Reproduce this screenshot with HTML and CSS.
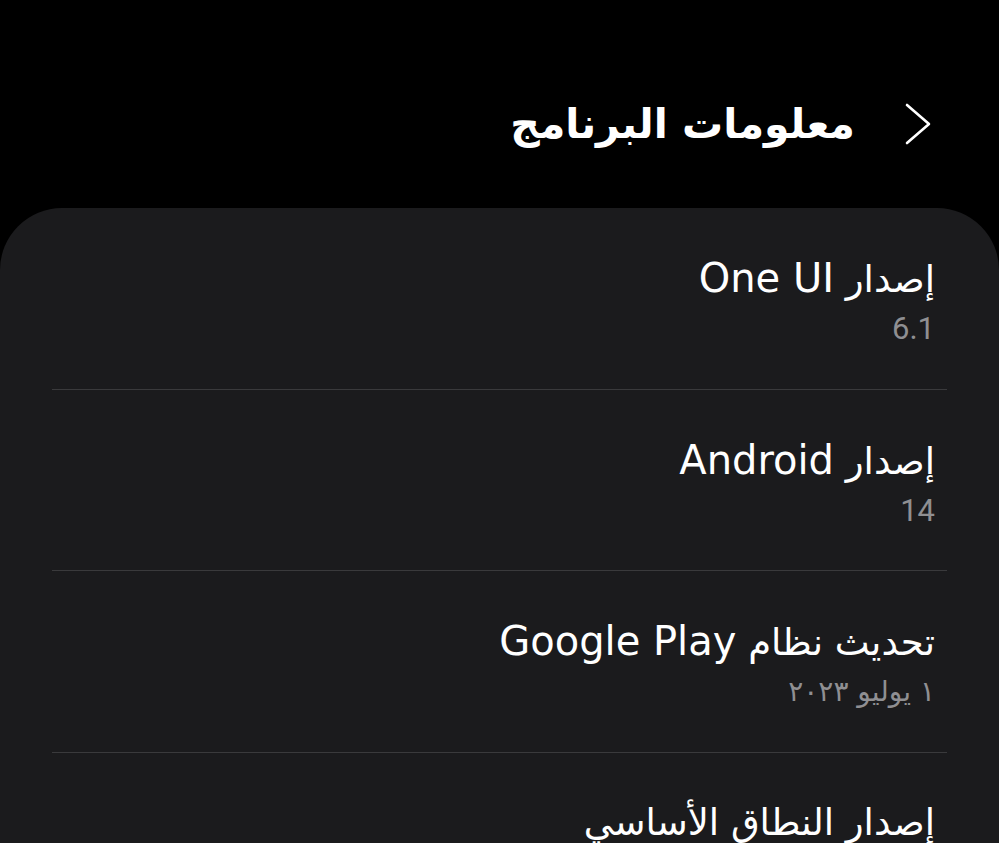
FILE: index.html
```html
<!DOCTYPE html>
<html lang="ar" dir="rtl">
<head>
<meta charset="utf-8">
<link rel="stylesheet" href="styles.css">
</head>
<body>
<header class="header">
  <svg class="back" width="30" height="44" viewBox="0 0 30 44" aria-hidden="true">
    <path d="M4 3 L26 22 L4 41" fill="none" stroke="#ffffff" stroke-width="2.6" stroke-linecap="round" stroke-linejoin="round"/>
  </svg>
  <h1 class="title">معلومات البرنامج</h1>
</header>
<main class="card">
  <div class="row">
    <div class="row-title">إصدار <span class="lat">One UI</span></div>
    <div class="row-sub">6.1</div>
  </div>
  <div class="row">
    <div class="row-title">إصدار <span class="lat">Android</span></div>
    <div class="row-sub">14</div>
  </div>
  <div class="row">
    <div class="row-title">تحديث نظام <span class="lat">Google Play</span></div>
    <div class="row-sub row-sub-ar">١ يوليو ٢٠٢٣</div>
  </div>
  <div class="row">
    <div class="row-title">إصدار النطاق الأساسي</div>
    <div class="row-sub">&nbsp;</div>
  </div>
</main>
</body>
</html>
```

FILE: styles.css
```css
html, body {
  margin: 0;
  padding: 0;
  background: #000000;
  height: 843px;
  overflow: hidden;
}
body {
  font-family: "DejaVu Sans", sans-serif;
  color: #ffffff;
  width: 999px;
}
.header {
  height: 168px;
  padding-top: 40px;
  padding-right: 66px;
  display: flex;
  align-items: center;
  gap: 48px;
  box-sizing: content-box;
}
.back {
  display: block;
  flex: none;
}
.title {
  margin: 0;
  font-family: "DejaVu Sans", sans-serif;
  font-weight: bold;
  font-size: 41px;
  line-height: 60px;
  color: #ffffff;
}
.card {
  background: #1b1b1d;
  border-radius: 62px 62px 0 0;
  min-height: 700px;
}
.row {
  position: relative;
  padding: 46px 64px 42.5px 64px;
}
.row::after {
  content: "";
  position: absolute;
  left: 52px;
  right: 52px;
  bottom: 0;
  height: 1px;
  background: #3a3a3c;
}
.row-title {
  font-family: "DejaVu Sans", sans-serif;
  font-size: 37px;
  line-height: 48px;
  height: 48px;
  color: #ffffff;
}
.lat {
  font-size: 40px;
}
.row-sub {
  margin-top: 9px;
  font-family: "Roboto", "DejaVu Sans", sans-serif;
  font-size: 31px;
  line-height: 36px;
  height: 36px;
  color: #8f8f92;
}
.row-sub-ar {
  font-family: "DejaVu Sans", sans-serif;
  font-size: 28px;
}
```
